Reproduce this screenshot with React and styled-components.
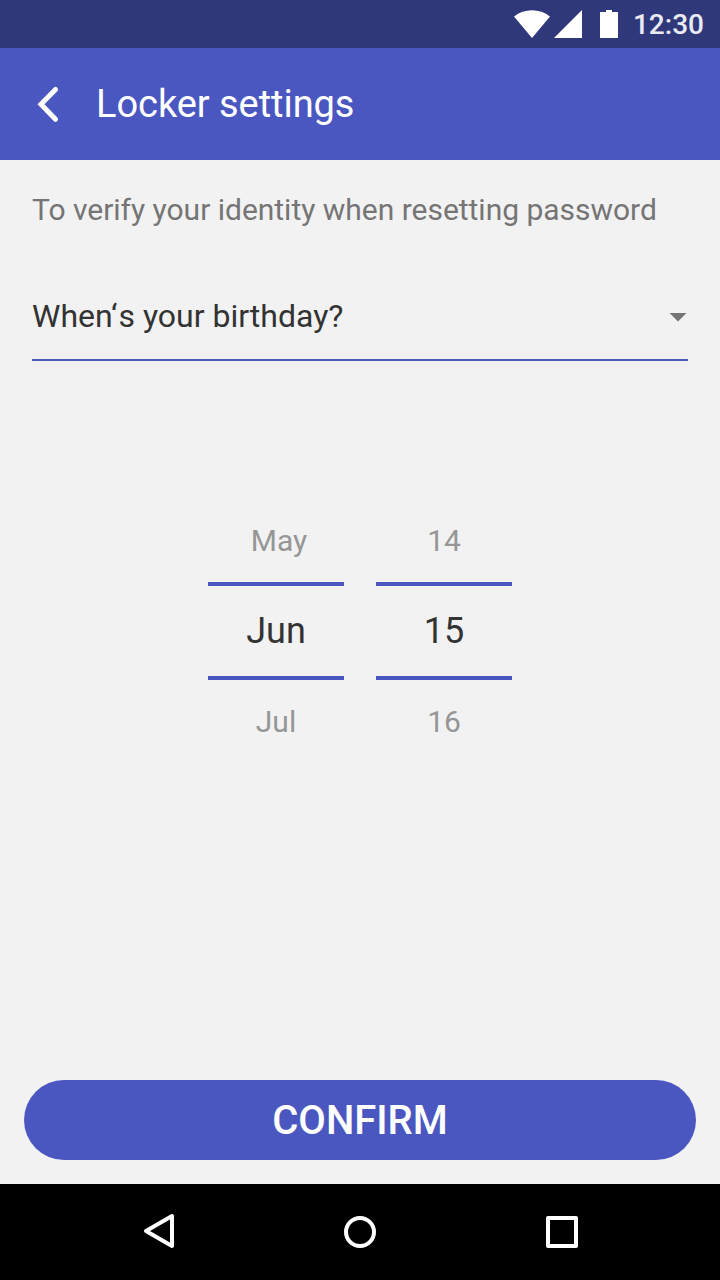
import React from 'react';
import styled, { createGlobalStyle } from 'styled-components';

const Global = createGlobalStyle`
  * { box-sizing: border-box; }
  body { margin: 0; font-family: Roboto, sans-serif; background: #f2f2f2; }
`;
const Screen = styled.div`
  width: 720px; height: 1280px; display: flex; flex-direction: column;
  background: #f2f2f2; overflow: hidden;
`;
const StatusBar = styled.header`
  height: 48px; flex: none; background: #2f387b; display: flex;
  align-items: center; justify-content: flex-end; padding-right: 16px;
`;
const StatusIcons = styled.svg`
  display: block; margin-right: 15px;
`;
const Clock = styled.time`
  font-size: 28px; line-height: 48px; font-weight: 500; color: #eaebf2;
  padding-top: 2px;
`;
const AppBar = styled.div`
  height: 112px; flex: none; background: #4a57c0; display: flex;
  align-items: center; padding-left: 36px;
`;
const BackButton = styled.button`
  width: 60px; height: 40px; padding: 0; border: 0; background: none; display: flex;
`;
const Title = styled.h1`
  margin: 0; font-size: 38px; line-height: 48px; font-weight: 400; color: #fff;
  letter-spacing: -0.05px;
`;
const Content = styled.main`
  flex: 1; display: flex; flex-direction: column; padding: 0 32px;
`;
const Hint = styled.p`
  margin: 30px 0 0; font-size: 30px; line-height: 40px; color: #757575; white-space: nowrap;
  letter-spacing: -0.02px;
`;
const Select = styled.div`
  margin-top: 42px; height: 89px; display: flex; justify-content: space-between;
  border-bottom: 2px solid #4a57c0; font-size: 32px; line-height: 88px; color: #333;
`;
const Quote = styled.span`
  margin-right: 1px;
`;
const Caret = styled.svg`
  display: block; margin: 41px 1px 0 0;
`;
const Pickers = styled.div`
  margin-top: 160px; display: flex; justify-content: center; gap: 32px;
`;
const Picker = styled.div`
  width: 136px; display: flex; flex-direction: column; text-align: center;
`;
const Option = styled.div`
  height: 61px; line-height: 40px; font-size: 30px; color: #969696;
  padding-left: ${({ $indent = 0 }) => $indent}px;
`;
const Selected = styled.div`
  height: 98px; line-height: 90px; font-size: 36px; color: #333;
  border: solid #4a57c0; border-width: 4px 0; margin-bottom: 22px;
`;
const Confirm = styled.button`
  margin: auto -8px 24px; height: 80px; flex: none; border: 0; border-radius: 40px;
  background: #4a57c0; color: #fff; font: 500 40px/78px Roboto, sans-serif; padding: 2px 0 0;
`;
const NavBar = styled.nav`
  height: 96px; flex: none; background: #000; display: flex; justify-content: center;
`;

const columns = [
  { previous: 'May', current: 'Jun', next: 'Jul', indent: 6 },
  { previous: '14', current: '15', next: '16' },
];

export default function App() {
  return (
    <Screen>
      <Global />
      <StatusBar>
        <StatusIcons width="106" height="48" viewBox="512 0 106 48" fill="#fff">
          <path d="M514 16.500C524 8 540 8 550 16.500L532 38Z" />
          <path d="M582 10V38H554Z" />
          <path d="M600 12H606V10H612V12H618V38H600Z" />
        </StatusIcons>
        <Clock>12:30</Clock>
      </StatusBar>
      <AppBar>
        <BackButton aria-label="Back">
          <svg width="24" height="40" viewBox="36 84 24 40" fill="none" stroke="#fff" strokeWidth="5">
            <path d="M55.500 89.500L41 104.300L55.500 119.300" strokeLinecap="round" />
          </svg>
        </BackButton>
        <Title>Locker settings</Title>
      </AppBar>
      <Content>
        <Hint>To verify your identity when resetting password</Hint>
        <Select>
          <span>When<Quote>‘</Quote>s your birthday?</span>
          <Caret width="18" height="9"><path d="M0.500 0H17.500L9 8.500Z" fill="#757575" /></Caret>
        </Select>
        <Pickers>
          {columns.map(({ previous, current, next, indent }) => (
            <Picker key={current}>
              <Option $indent={indent}>{previous}</Option>
              <Selected>{current}</Selected>
              <Option>{next}</Option>
            </Picker>
          ))}
        </Pickers>
        <Confirm>CONFIRM</Confirm>
      </Content>
      <NavBar>
        <svg width="720" height="96" viewBox="0 1184 720 96" fill="none" stroke="#fff" strokeWidth="4">
          <path d="M146 1231L172 1216V1246Z" strokeLinejoin="round" />
          <circle cx="360" cy="1232" r="14" />
          <rect x="548" y="1218" width="28" height="28" strokeLinejoin="round" />
        </svg>
      </NavBar>
    </Screen>
  );
}
